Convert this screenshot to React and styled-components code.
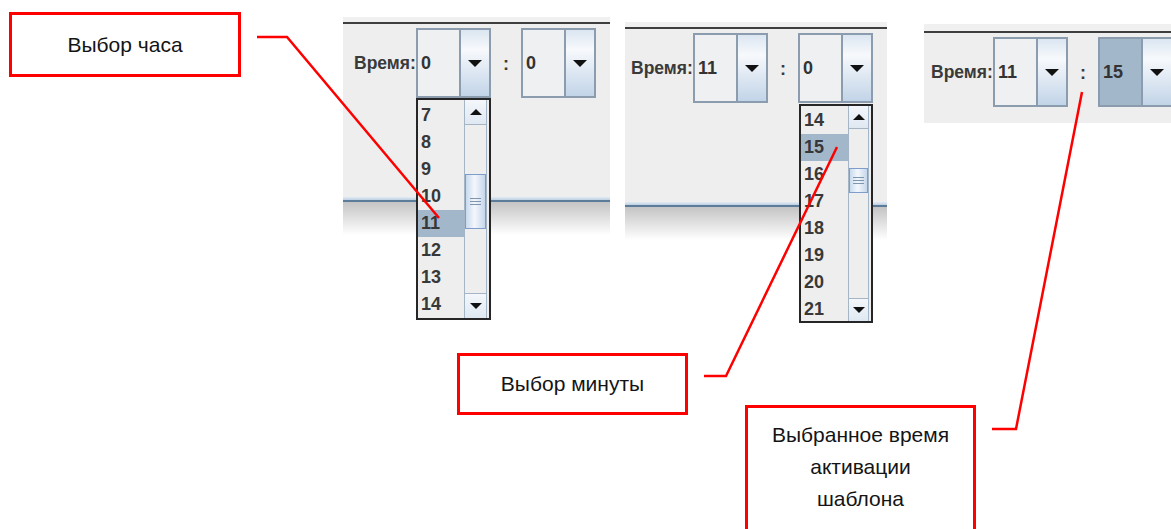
import styled, { createGlobalStyle } from 'styled-components';

const GlobalStyle = createGlobalStyle`
  html, body {
    margin: 0;
    padding: 0;
    background: #ffffff;
  }
  body {
    font-family: "Liberation Sans", Arial, sans-serif;
  }
`;

const Stage = styled.div`
  position: relative;
  width: 1171px;
  height: 529px;
  overflow: hidden;
  background: #ffffff;
`;

// screenshot pieces placed on the canvas
const Shot = styled.div`
  position: absolute;
  left: ${(p) => p.$x}px;
  top: ${(p) => p.$y}px;
  width: ${(p) => p.$w}px;
  display: flex;
  flex-direction: column;
`;

const TopEdge = styled.div`
  height: ${(p) => p.$gap}px;
  background: #f0f0f0;
  border-bottom: 2px solid #3e3e3e;
`;

const Toolbar = styled.div`
  height: ${(p) => p.$h}px;
  box-sizing: border-box;
  background: #eeeeee;
  display: flex;
  align-items: flex-start;
  padding: 4px 0 0 ${(p) => p.$pad}px;
`;

const BottomEdge = styled.div`
  height: 3px;
  background: linear-gradient(#e4ecf4, #bccfe3);
  border-bottom: 2px solid #5d7c99;
`;

const Fade = styled.div`
  height: 33px;
  background: linear-gradient(#c4c4c4, rgba(255, 255, 255, 0));
`;

const Label = styled.span`
  width: 62px;
  height: 70px;
  line-height: 70px;
  font-weight: bold;
  font-size: 17.5px;
  color: #3a3a3a;
  white-space: nowrap;
`;

const Combo = styled.div`
  display: flex;
  flex: none;
  width: 75px;
  height: 70px;
  box-sizing: border-box;
  border: 2px solid #8a9cae;
`;

const ComboValue = styled.div`
  flex: 1;
  display: flex;
  align-items: center;
  padding-left: 3px;
  background: ${(p) => (p.$selected ? '#a3b7cb' : '#eef0f2')};
  border-right: 2px solid #8a9cae;
  font-weight: bold;
  font-size: 18px;
  color: #333333;
`;

const ComboButton = styled.div`
  width: 28px;
  flex: none;
  display: flex;
  align-items: center;
  justify-content: center;
  background: linear-gradient(#dbe6f1 0%, #f7f9fc 30%, #c2d4e8 100%);
`;

const Arrow = styled.span`
  width: 0;
  height: 0;
  border-left: ${(p) => p.$size}px solid transparent;
  border-right: ${(p) => p.$size}px solid transparent;
  ${(p) => (p.$up ? 'border-bottom' : 'border-top')}: ${(p) => p.$size}px solid #111111;
`;

const Colon = styled.span`
  width: 30px;
  flex: none;
  height: 70px;
  line-height: 72px;
  text-align: center;
  font-weight: bold;
  font-size: 18px;
  color: #3a3a3a;
`;

// opened combo lists
const Popup = styled.div`
  position: absolute;
  left: ${(p) => p.$x}px;
  top: ${(p) => p.$y}px;
  width: ${(p) => p.$w}px;
  height: ${(p) => p.$h}px;
  box-sizing: border-box;
  border: 2px solid #262626;
  background: #eeeeee;
  display: flex;
  z-index: 2;
`;

const Items = styled.div`
  flex: 1;
  display: flex;
  flex-direction: column;
  padding-top: ${(p) => p.$pt}px;
  overflow: hidden;
`;

const Item = styled.div`
  height: 27px;
  flex: none;
  line-height: 27px;
  padding-left: 3px;
  font-weight: bold;
  font-size: 18px;
  color: #383838;
  background: ${(p) => (p.$selected ? '#a3b7cb' : 'transparent')};
`;

const ScrollBar = styled.div`
  width: ${(p) => p.$w}px;
  flex: none;
  margin-right: 2px;
  box-sizing: border-box;
  display: flex;
  flex-direction: column;
  border-left: 1px solid #a4b5c6;
  border-right: 1px solid #a4b5c6;
`;

const ScrollButton = styled.div`
  height: ${(p) => p.$h}px;
  flex: none;
  box-sizing: border-box;
  display: flex;
  align-items: center;
  justify-content: center;
  background: linear-gradient(#f4f7fb, #dfe8f2);
  border-top: ${(p) => (p.$bottom ? '1px solid #a4b5c6' : 'none')};
  border-bottom: ${(p) => (p.$bottom ? 'none' : '1px solid #a4b5c6')};
`;

const Track = styled.div`
  flex: 1;
  position: relative;
  background: #eeeeee;
`;

const Thumb = styled.div`
  position: absolute;
  left: 0;
  right: 0;
  top: ${(p) => p.$top}px;
  height: ${(p) => p.$h}px;
  box-sizing: border-box;
  border: 1px solid #7e9ccc;
  background: linear-gradient(90deg, #c9daee 0%, #f3f7fc 45%, #c5d7ec 100%);
  display: flex;
  flex-direction: column;
  align-items: center;
  justify-content: center;
  gap: 2px;
`;

const Grip = styled.span`
  width: 11px;
  height: 1px;
  background: #7f94ad;
`;

// red annotation boxes
const Callout = styled.div`
  position: absolute;
  left: ${(p) => p.$x}px;
  top: ${(p) => p.$y}px;
  width: ${(p) => p.$w}px;
  height: ${(p) => p.$h}px;
  box-sizing: border-box;
  border: 3px solid #ff0000;
  background: #ffffff;
  display: flex;
  flex-direction: column;
  align-items: center;
  justify-content: ${(p) => (p.$top ? 'flex-start' : 'center')};
  padding-top: ${(p) => (p.$top ? 11 : 0)}px;
  font-size: 21px;
  line-height: 32px;
  color: #141414;
  text-align: center;
`;

const Leaders = styled.svg`
  position: absolute;
  left: 0;
  top: 0;
  z-index: 3;
  pointer-events: none;
`;

function TimeCombo({ value, selected }) {
  return (
    <Combo>
      <ComboValue $selected={selected}>{value}</ComboValue>
      <ComboButton>
        <Arrow $size={7} />
      </ComboButton>
    </Combo>
  );
}

function TimePanel({ x, y, w, gap, h, pad, hour, minute, minuteSelected, bottom }) {
  return (
    <Shot $x={x} $y={y} $w={w}>
      <TopEdge $gap={gap} />
      <Toolbar $h={h} $pad={pad}>
        <Label>Время:</Label>
        <TimeCombo value={hour} />
        <Colon>:</Colon>
        <TimeCombo value={minute} selected={minuteSelected} />
      </Toolbar>
      {bottom && (
        <>
          <BottomEdge />
          <Fade />
        </>
      )}
    </Shot>
  );
}

function ListPopup({ x, y, w, h, pt, items, selected, scrollW, btnH, thumbTop, thumbH }) {
  return (
    <Popup $x={x} $y={y} $w={w} $h={h}>
      <Items $pt={pt}>
        {items.map((n) => (
          <Item key={n} $selected={n === selected}>
            {n}
          </Item>
        ))}
      </Items>
      <ScrollBar $w={scrollW}>
        <ScrollButton $h={btnH}>
          <Arrow $size={6} $up />
        </ScrollButton>
        <Track>
          <Thumb $top={thumbTop} $h={thumbH}>
            <Grip />
            <Grip />
            <Grip />
          </Thumb>
        </Track>
        <ScrollButton $h={btnH} $bottom>
          <Arrow $size={6} />
        </ScrollButton>
      </ScrollBar>
    </Popup>
  );
}

export default function App() {
  return (
    <>
      <GlobalStyle />
      <Stage>
        <TimePanel x={343} y={17} w={267} gap={5} h={173} pad={11} hour="0" minute="0" bottom />
        <TimePanel x={625} y={22} w={262} gap={5} h={173} pad={6} hour="11" minute="0" bottom />
        <TimePanel x={924} y={24} w={260} gap={7} h={90} pad={7} hour="11" minute="15" minuteSelected />

        <ListPopup
          x={416}
          y={98}
          w={75}
          h={222}
          pt={2}
          items={[7, 8, 9, 10, 11, 12, 13, 14]}
          selected={11}
          scrollW={23}
          btnH={25}
          thumbTop={49}
          thumbH={55}
        />
        <ListPopup
          x={799}
          y={104}
          w={74}
          h={219}
          pt={1}
          items={[14, 15, 16, 17, 18, 19, 20, 21]}
          selected={15}
          scrollW={21}
          btnH={23}
          thumbTop={39}
          thumbH={25}
        />

        <Callout $x={9} $y={12} $w={232} $h={65}>
          Выбор часа
        </Callout>
        <Callout $x={457} $y={353} $w={231} $h={62}>
          Выбор минуты
        </Callout>
        <Callout $x={745} $y={405} $w={231} $h={140} $top>
          <span>Выбранное время</span>
          <span>активации</span>
          <span>шаблона</span>
        </Callout>

        <Leaders width="1171" height="529">
          <polyline points="257,37 287,37 439,218" fill="none" stroke="#ff0000" strokeWidth="2.5" />
          <polyline points="704,376 726,376 837,147" fill="none" stroke="#ff0000" strokeWidth="2.5" />
          <polyline points="992,429 1016,429 1082,92" fill="none" stroke="#ff0000" strokeWidth="2.5" />
        </Leaders>
      </Stage>
    </>
  );
}
